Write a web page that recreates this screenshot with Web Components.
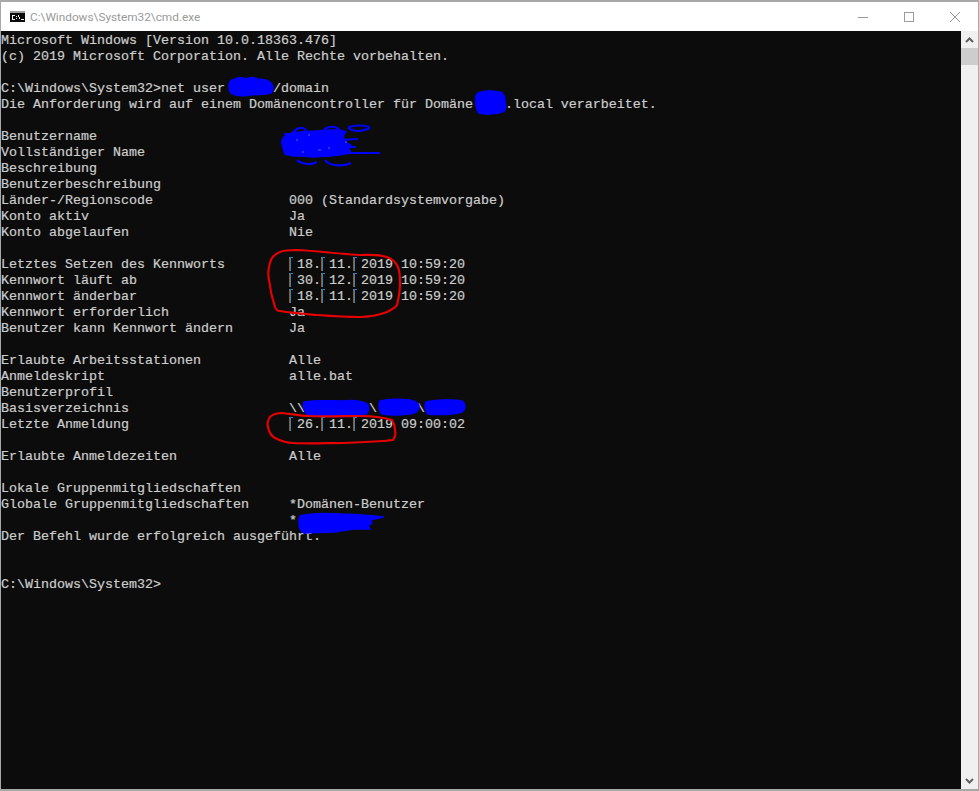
<!DOCTYPE html>
<html>
<head>
<meta charset="utf-8">
<title>cmd.exe</title>
<style>
  html, body { margin: 0; height: 100%; background: #fff; }
</style>
</head>
<body>
<cmd-window>
  <cmd-titlebar title-text="C:\Windows\System32\cmd.exe"></cmd-titlebar>
  <cmd-console></cmd-console>
</cmd-window>

<script>
const windowTemplate = document.createElement('template');
windowTemplate.innerHTML = `
  <style>
    :host {
      display: flex;
      flex-direction: column;
      box-sizing: border-box;
      width: 979px;
      height: 791px;
      border: 1px solid #a8a8a8;
      border-top-width: 2px;
      border-bottom-width: 2px;
      background: #fff;
    }
  </style>
  <slot></slot>
`;

class CmdWindow extends HTMLElement {
  constructor() {
    super();
    this.attachShadow({ mode: 'open' });
    this.shadowRoot.appendChild(windowTemplate.content.cloneNode(true));
  }
}

const titlebarTemplate = document.createElement('template');
titlebarTemplate.innerHTML = `
  <style>
    :host {
      display: flex;
      align-items: center;
      flex-shrink: 0;
      height: 29px;
      background: #fff;
      font-family: Roboto, 'Open Sans', sans-serif;
      font-size: 11.8px;
      color: #9a9a9a;
    }
    .app-icon { margin-left: 9px; margin-right: 5px; flex-shrink: 0; }
    .title { flex: 1; white-space: nowrap; }
    .btn { width: 46px; height: 29px; display: flex; align-items: center; justify-content: center; }
  </style>
  <svg class="app-icon" width="15" height="11" viewBox="0 0 15 11">
    <rect width="15" height="11" fill="#0c0c0c"/>
    <rect width="15" height="2" fill="#a0a0a0"/>
    <path d="M2 4h3v1H3v3h2v1H2zM6 5h1v1H6zM6 7h1v1H6zM8 4h1v2H8zM9 6h1v2H9zM11 8h3v1h-3z" fill="#f0f0f0"/>
  </svg>
  <span class="title" id="title"></span>
  <div class="btn"><svg width="10" height="10" viewBox="0 0 10 10"><path d="M0 5.5h10" stroke="#9a9a9a" fill="none"/></svg></div>
  <div class="btn"><svg width="10" height="10" viewBox="0 0 10 10"><rect x=".5" y=".5" width="9" height="9" stroke="#9a9a9a" fill="none"/></svg></div>
  <div class="btn"><svg width="10" height="10" viewBox="0 0 10 10"><path d="M0 0l10 10M10 0L0 10" stroke="#9a9a9a" fill="none"/></svg></div>
`;

class CmdTitlebar extends HTMLElement {
  constructor() {
    super();
    this.attachShadow({ mode: 'open' });
    this.shadowRoot.appendChild(titlebarTemplate.content.cloneNode(true));
  }
  connectedCallback() {
    this.shadowRoot.getElementById('title').textContent = this.getAttribute('title-text');
  }
}

const M = '<i></i>'; // the tofu mark the console shows in front of date parts

const consoleLines = [
  'Microsoft Windows [Version 10.0.18363.476]',
  '(c) 2019 Microsoft Corporation. Alle Rechte vorbehalten.',
  '',
  'C:\\Windows\\System32&gt;net user      /domain',
  'Die Anforderung wird auf einem Domänencontroller für Domäne    .local verarbeitet.',
  '',
  'Benutzername',
  'Vollständiger Name',
  'Beschreibung',
  'Benutzerbeschreibung',
  'Länder-/Regionscode                 000 (Standardsystemvorgabe)',
  'Konto aktiv                         Ja',
  'Konto abgelaufen                    Nie',
  '',
  'Letztes Setzen des Kennworts        ' + M + '18.' + M + '11.' + M + '2019 10:59:20',
  'Kennwort läuft ab                   ' + M + '30.' + M + '12.' + M + '2019 10:59:20',
  'Kennwort änderbar                   ' + M + '18.' + M + '11.' + M + '2019 10:59:20',
  'Kennwort erforderlich               Ja',
  'Benutzer kann Kennwort ändern       Ja',
  '',
  'Erlaubte Arbeitsstationen           Alle',
  'Anmeldeskript                       alle.bat',
  'Benutzerprofil',
  'Basisverzeichnis                    \\\\        \\     \\',
  'Letzte Anmeldung                    ' + M + '26.' + M + '11.' + M + '2019 09:00:02',
  '',
  'Erlaubte Anmeldezeiten              Alle',
  '',
  'Lokale Gruppenmitgliedschaften',
  'Globale Gruppenmitgliedschaften     *Domänen-Benutzer',
  '                                    *',
  'Der Befehl wurde erfolgreich ausgeführt.',
  '',
  '',
  'C:\\Windows\\System32&gt;'
];

const consoleTemplate = document.createElement('template');
consoleTemplate.innerHTML = `
  <style>
    :host {
      display: flex;
      flex: 1;
      min-height: 0;
      background: #0c0c0c;
    }
    .screen {
      position: relative;
      flex: 1;
      min-width: 0;
      overflow: hidden;
    }
    #out {
      padding-top: 1px;
      font-family: 'Liberation Mono', 'DejaVu Sans Mono', monospace;
      font-size: 13.33px;
      color: #cccccc;
      -webkit-text-stroke: 0.2px #cccccc;
    }
    .line {
      height: 16px;
      line-height: 17px;
      white-space: pre;
    }
    i {
      display: inline-block;
      width: 4px;
      height: 14px;
      margin-right: 4px;
      vertical-align: -3px;
      background:
        linear-gradient(#3a7fae 1px, transparent 1px),
        linear-gradient(to right, #8a6236 1px, #3a7fae 1px, #3a7fae 2px, transparent 2px);
    }
    svg.marks {
      position: absolute;
      left: -1px;
      top: -31px;
      pointer-events: none;
    }
    .scrollbar {
      display: flex;
      flex-direction: column;
      width: 17px;
      flex-shrink: 0;
      background: #f0f0f0;
    }
    .arrow { height: 17px; display: flex; align-items: center; justify-content: center; }
    .thumb { height: 17px; background: #cdcdcd; }
    .track { flex: 1; }
  </style>
  <div class="screen">
    <div id="out"></div>
    <svg class="marks" width="979" height="791" viewBox="0 0 979 791" fill="none">
      <g fill="#0000ff" stroke="#0000ff" stroke-width="1.5">
        <path d="M229 85c0-4 3-5 6-6 3-2 8-2 11 0 4-2 9-2 11 0 5 0 11 1 14 4 3 3 2 8 0 10-6 2-14 1-20 2-7 1-16 1-20-2-2-2-2-5-2-8z"/>
        <path d="M476 96c1-3 4-4 6-4 5-2 12-1 18 0 4 1 5 5 5 9 1 4 1 8-1 10-5 3-20 4-25 2-3-3-4-11-3-17z"/>
        <path d="M286 136c5-4 10-4 14-4l18-1 14-1 8 0 6 2-3 4 2 6 6 3-2 4 2 4-12 2-8 1-18 1-12-1-8 0-8-2-2-6-1-6 2-5z"/>
        <path d="M304 402c12-2 26-1 40-1 10-1 22 0 24 4 2 4 0 9-4 10-14 2-38 2-56 0-4-3-6-9-4-13z"/>
        <path d="M380 401c8-2 20-2 30-1 5 1 9 3 9 6 0 5-4 8-10 8-8 1-20 1-27 0-3-3-4-9-2-13z"/>
        <path d="M426 402c8-2 28-3 36-1 4 3 4 8 0 11-10 3-26 3-34 2-3-3-4-9-2-12z"/>
        <path d="M300 516c10-3 25-3 40-2 12 0 26 1 44 3l-14 3 2 3-4 3 2 3-16 0-20 3-30 1c-4-2-5-6-5-10 0-3 0-5 1-7z"/>
      </g>
      <g stroke="#0000ff" stroke-width="2.2">
        <path d="M349 127c6-2 16-2 20 0 1 2-4 3-10 4-6 0-11-2-10-4z"/>
        <path d="M291 136c2-6 8-9 12-8 3 1 3 4 6 6M322 133c2-5 8-7 13-6 3 1 6 4 7 8"/>
        <path d="M297 160c6 5 14 5 20 2M325 160c4 6 18 7 26 3"/>
        <path d="M283 146c-2-4 0-8 4-11M340 153l40 0M284 134l58 0M358 139l-18 1M342 147l14 0"/>
      </g>
      <path d="M296 140h2M308 135h2M318 150h3M302 152h2M328 148h2M345 142h2" stroke="#5a5aff" stroke-width="1"/>
      <g stroke="#e60000" stroke-width="2.2" stroke-linecap="round" stroke-linejoin="round">
        <path d="M297 250c-7 0-13 0-17 2-5 2-9 6-10 11-2 6-2 12-1 17 1 9 3 18 6 27 1 3 3 4 5 4 12 2 25 3 37 4 14 1 29 2 43 2 9 0 19-2 27-5 4-2 9-5 10-7 2-8 3-15 3-22 0-6 0-11-2-16-2-5-6-8-11-10-9-3-18-2-27-2-21-1-42-4-63-5z"/>
        <path d="M282 413c-5 0-9 1-12 4-2 3-3 7-2 10 1 5 3 9 7 11 6 3 12 5 18 5 17 1 33 0 50 0 17-1 33-1 50-3 2-3 3-7 2-10 0-4-1-7-3-10-10-3-21-4-32-4-17 0-33 1-50 0-9 0-19-2-28-3z"/>
      </g>
    </svg>
  </div>
  <div class="scrollbar">
    <div class="arrow"><svg width="9" height="6" viewBox="0 0 9 6"><path d="M1 5l3.5-3.5L8 5" stroke="#606060" stroke-width="2" fill="none"/></svg></div>
    <div class="thumb"></div>
    <div class="track"></div>
    <div class="arrow"><svg width="9" height="6" viewBox="0 0 9 6"><path d="M1 1l3.5 3.5L8 1" stroke="#606060" stroke-width="2" fill="none"/></svg></div>
  </div>
`;

class CmdConsole extends HTMLElement {
  constructor() {
    super();
    this.attachShadow({ mode: 'open' });
    this.shadowRoot.appendChild(consoleTemplate.content.cloneNode(true));
  }
  connectedCallback() {
    this.shadowRoot.getElementById('out').innerHTML = consoleLines
      .map((l) => '<div class="line">' + l + '</div>')
      .join('');
  }
}

customElements.define('cmd-window', CmdWindow);
customElements.define('cmd-titlebar', CmdTitlebar);
customElements.define('cmd-console', CmdConsole);
</script>
</body>
</html>
